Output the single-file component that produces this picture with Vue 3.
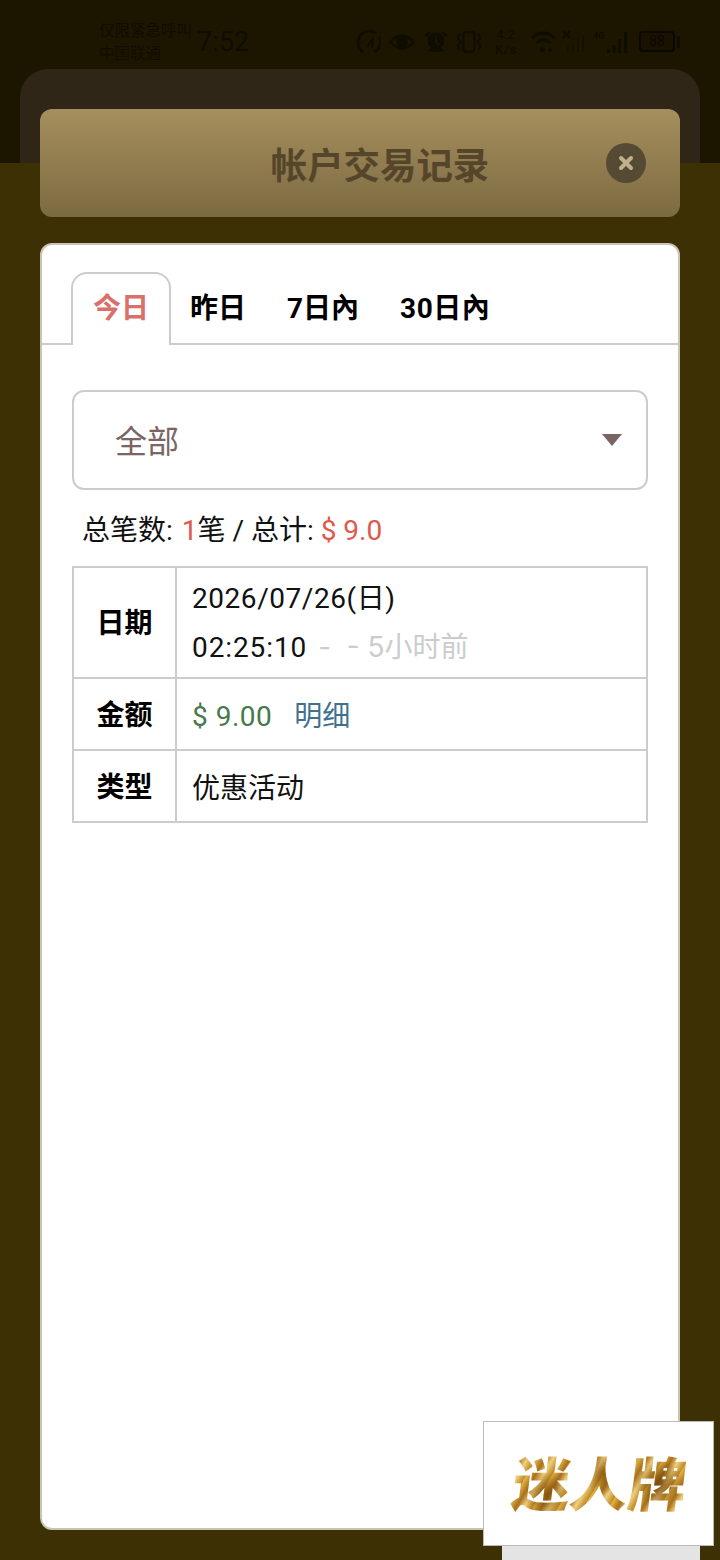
<template>
  <div class="page">
    <div class="top-band">
      <div class="status-bar">
        <div class="carrier">
          <span>仅限紧急呼叫</span>
          <span>中国联通</span>
        </div>
        <div class="clock">7:52</div>
        <div class="status-icons">
          <svg class="ic-speed" width="24" height="24" viewBox="0 0 24 24" fill="none" stroke="currentColor" stroke-width="2.6">
            <path d="M6 22 A10.5 10.5 0 0 1 19 3" />
            <path d="M22 7 A10.5 10.5 0 0 1 17 22" />
            <path d="M10 17 L16 8 L15 18" stroke-width="2" />
          </svg>
          <svg class="ic-eye" width="26" height="18" viewBox="0 0 26 18" fill="none" stroke="currentColor" stroke-width="2.4">
            <path d="M1.5 9 Q13 -4 24.5 9 Q13 22 1.5 9 Z" />
            <circle cx="13" cy="9" r="4.6" fill="currentColor" />
          </svg>
          <svg class="ic-alarm" width="24" height="23" viewBox="0 0 24 23" fill="currentColor">
            <circle cx="12" cy="11" r="8.5" />
            <path d="M8 17 Q3 21 3 21 L12 22 L21 21 L16 17 Z" />
            <path d="M0.5 5 L5 1 L6.5 3 L2.5 7 Z M23.5 5 L19 1 L17.5 3 L21.5 7 Z" />
            <path d="M12 6 V12 L15.5 15" fill="none" stroke="#1c1600" stroke-width="1.8" />
          </svg>
          <svg class="ic-vibrate" width="26" height="22" viewBox="0 0 26 22" fill="none" stroke="currentColor" stroke-width="2">
            <rect x="7.5" y="1.2" width="11" height="19.6" rx="2.5" stroke-width="2.2" />
            <path d="M3.5 3 L1.5 7 L4.5 11 L1.5 15 L3.5 19" />
            <path d="M22.5 3 L24.5 7 L21.5 11 L24.5 15 L22.5 19" />
          </svg>
          <div class="net-speed">
            <span>4.2</span>
            <span>K/s</span>
          </div>
          <svg class="ic-wifi" width="25" height="23" viewBox="0 0 25 23" fill="none" stroke="currentColor" stroke-width="2.8">
            <path d="M1 8 Q12.5 -2 24 8" />
            <path d="M5.5 13 Q12.5 6.5 19.5 13" />
            <circle cx="11.5" cy="19.5" r="2.6" fill="currentColor" stroke="none" />
            <path d="M18 17.5 L21 20 L18 22.5 Z" fill="currentColor" stroke="none" />
          </svg>
          <svg class="ic-nosim" width="25" height="23" viewBox="0 0 25 23" fill="currentColor">
            <path d="M2 1 L9 8 M9 1 L2 8" stroke="currentColor" stroke-width="1.8" />
            <g opacity="0.55">
              <rect x="6" y="15" width="1.6" height="7" />
              <rect x="11" y="11" width="1.6" height="11" />
              <rect x="16" y="8" width="1.6" height="14" />
              <rect x="21" y="5" width="1.6" height="17" />
            </g>
          </svg>
          <div class="signal">
            <span class="lte">4G</span>
            <svg width="23" height="22" viewBox="0 0 23 22" fill="currentColor">
              <rect x="1" y="18" width="3" height="4" />
              <rect x="6.5" y="14" width="3" height="8" />
              <rect x="12" y="8" width="3" height="14" />
              <rect x="18" y="1" width="3.4" height="21" />
            </svg>
          </div>
          <div class="battery">
            <div class="battery-body">88</div>
            <div class="battery-tip"></div>
          </div>
        </div>
      </div>
      <div class="back-panel"></div>
    </div>

    <div class="modal">
      <div class="modal-head">
        <div class="modal-title">帐户交易记录</div>
        <div class="close-btn">
          <svg width="16" height="16" viewBox="0 0 16 16" stroke="#bfb08e" stroke-width="4" stroke-linecap="round">
            <path d="M3 3 L13 13 M13 3 L3 13" />
          </svg>
        </div>
      </div>

      <div class="modal-body">
        <div class="tabs">
          <div
            v-for="(tab, index) in tabs"
            :key="tab"
            class="tab"
            :class="{ active: index === 0 }"
          >{{ tab }}</div>
        </div>

        <div class="content">
          <div class="select">
            <span>全部</span>
            <i class="caret"></i>
          </div>

          <div class="summary">总笔数: <em class="count">1</em>笔 / 总计: <em>$ 9.0</em></div>

          <table class="records">
            <tbody>
              <tr class="row-date">
                <th>日期</th>
                <td>
                  <div class="date-line">2026/07/26(日)</div>
                  <div><span class="time">02:25:10</span> <span class="ago">-&nbsp;&nbsp;- 5小时前</span></div>
                </td>
              </tr>
              <tr class="row-plain">
                <th>金额</th>
                <td><span class="amount">$ 9.00</span><span class="detail">明细</span></td>
              </tr>
              <tr class="row-plain">
                <th>类型</th>
                <td>优惠活动</td>
              </tr>
            </tbody>
          </table>
        </div>
      </div>
    </div>

    <div class="brand">
      <span class="brand-text">迷人牌</span>
    </div>
    <div class="brand-foot"></div>
  </div>
</template>

<script setup>
const tabs = ['今日', '昨日', '7日內', '30日內']
</script>

<style>
html,
body {
  margin: 0;
  background: #3d3005;
}
</style>

<style scoped>
.page {
  position: relative;
  width: 720px;
  height: 1560px;
  overflow: hidden;
  background: #3d3005;
  font-family: "Roboto", "Noto Sans CJK SC", sans-serif;
}

.top-band {
  height: 163px;
  background: #1c1600;
  display: flex;
  flex-direction: column;
}

.status-bar {
  height: 69px;
  padding: 0 40px 0 99px;
  display: flex;
  align-items: center;
  color: #0f0c00;
  box-sizing: border-box;
}

.carrier {
  display: flex;
  flex-direction: column;
  gap: 3px;
  font-size: 15.5px;
  line-height: 20px;
  margin-top: 16px;
}

.clock {
  margin: 14px 0 0 5px;
  font-size: 27px;
  line-height: 30px;
  flex: 1;
}

.status-icons {
  display: flex;
  align-items: center;
  margin-top: 14px;
}

.status-icons svg {
  display: block;
}

.ic-eye {
  margin-left: 8px;
}

.ic-alarm {
  margin-left: 9px;
}

.ic-vibrate {
  margin-left: 8px;
}

.net-speed {
  display: flex;
  flex-direction: column;
  align-items: center;
  width: 25px;
  margin-left: 11px;
  font-size: 13.5px;
  line-height: 15px;
}

.ic-wifi {
  margin-left: 13px;
}

.ic-nosim {
  margin-left: 5px;
}

.signal {
  margin-left: 7px;
  display: flex;
  align-items: flex-start;
}

.lte {
  width: 13px;
  font-size: 9px;
  font-weight: 700;
  line-height: 10px;
}

.battery {
  display: flex;
  align-items: center;
  gap: 2px;
  margin-left: 10px;
}

.battery-body {
  width: 36px;
  height: 21px;
  box-sizing: border-box;
  border: 2.4px solid currentColor;
  border-radius: 4px;
  background: #181300;
  color: #0a0800;
  font-size: 14px;
  line-height: 17px;
  text-align: center;
}

.battery-tip {
  width: 3px;
  height: 12px;
  background: currentColor;
}

.back-panel {
  flex: 1;
  margin: 0 20px;
  background: #2f2618;
  border-radius: 28px 28px 0 0;
}

.modal {
  position: absolute;
  top: 109px;
  left: 40px;
  width: 640px;
  display: flex;
  flex-direction: column;
  gap: 26px;
}

.modal-head {
  height: 108px;
  padding: 0 34px 0 114px;
  display: flex;
  align-items: center;
  border-radius: 12px;
  background: linear-gradient(#a68f5e, #7c6a41);
}

.modal-title {
  flex: 1;
  text-align: center;
  font-size: 36.4px;
  font-weight: 700;
  color: #55452a;
}

.close-btn {
  width: 40px;
  height: 40px;
  border-radius: 50%;
  background: #554a33;
  display: flex;
  align-items: center;
  justify-content: center;
}

.modal-body {
  height: 1287px;
  box-sizing: border-box;
  border: 2px solid #c9c5b4;
  border-radius: 12px;
  background: #fff;
}

.tabs {
  height: 100px;
  box-sizing: border-box;
  padding: 27px 0 0 29px;
  display: flex;
  align-items: flex-start;
  border-bottom: 2px solid #ccc;
}

.tab {
  padding: 0 20px;
  font-size: 28px;
  font-weight: 700;
  line-height: 70px;
  color: #000;
  border: 2px solid transparent;
  border-bottom: 0;
}

.tab + .tab {
  margin-left: -3px;
}

.tab:nth-child(4) {
  letter-spacing: 0.5px;
}

.tab.active {
  height: 73px;
  box-sizing: border-box;
  color: #d9706a;
  background: #fff;
  border-color: #ccc;
  border-radius: 16px 16px 0 0;
}

.content {
  padding: 45px 30px 0;
}

.select {
  height: 100px;
  box-sizing: border-box;
  padding: 0 24px 3px 41px;
  display: flex;
  align-items: center;
  justify-content: space-between;
  border: 2px solid #ccc;
  border-radius: 12px;
  font-size: 32px;
  color: #7a6464;
}

.caret {
  width: 0;
  height: 0;
  margin-top: 3px;
  border-left: 10px solid transparent;
  border-right: 10px solid transparent;
  border-top: 12px solid #7a6464;
}

.summary {
  height: 76px;
  padding-left: 10px;
  white-space: pre;
  font-size: 28px;
  line-height: 82px;
  color: #111;
}

.summary em {
  font-style: normal;
  color: #e0584a;
}

.summary .count {
  margin-left: 2px;
}

.records {
  width: 576px;
  border-collapse: collapse;
  font-size: 28px;
  color: #111;
}

.records th,
.records td {
  border: 2px solid #ccc;
  padding: 0;
}

.records th {
  width: 101px;
  padding-bottom: 2px;
  font-weight: 700;
  color: #000;
  text-align: center;
}

.row-date th {
  padding-bottom: 4px;
}

.records td {
  padding-left: 15px;
}

.row-date {
  height: 111px;
}

.row-date td {
  line-height: 49px;
}

.row-plain {
  height: 72px;
}

.date-line {
  letter-spacing: 0.55px;
}

.time {
  letter-spacing: 0.9px;
}

.ago {
  margin-left: 4px;
  font-family: "Inter", "Noto Sans CJK SC", sans-serif;
  color: #ccc;
}

.amount {
  letter-spacing: 0.5px;
  color: #47784c;
}

.detail {
  margin-left: 22px;
  color: #3f7090;
}

.brand {
  position: absolute;
  left: 483px;
  top: 1421px;
  width: 231px;
  height: 125px;
  box-sizing: border-box;
  border: 1px solid #bbb;
  background: #fff;
  display: flex;
  align-items: center;
  justify-content: center;
}

.brand-text {
  margin: 0 0 6px 3px;
  font-family: "Noto Sans CJK SC", sans-serif;
  font-size: 58px;
  font-weight: 900;
  line-height: 66px;
  transform: skewX(-7deg);
  color: transparent;
  background:
    radial-gradient(circle at 20% 70%, rgba(120, 70, 5, 0.75) 0, rgba(120, 70, 5, 0) 22px),
    radial-gradient(circle at 52% 40%, rgba(130, 78, 8, 0.8) 0, rgba(130, 78, 8, 0) 20px),
    radial-gradient(circle at 84% 55%, rgba(110, 62, 5, 0.8) 0, rgba(110, 62, 5, 0) 24px),
    repeating-linear-gradient(115deg, #e6b84a 0, #a8701a 8px, #f0d180 15px, #bd861f 23px);
  -webkit-background-clip: text;
  background-clip: text;
}

.brand-foot {
  position: absolute;
  left: 502px;
  top: 1546px;
  width: 198px;
  height: 14px;
  background: #e4e4e4;
}
</style>
